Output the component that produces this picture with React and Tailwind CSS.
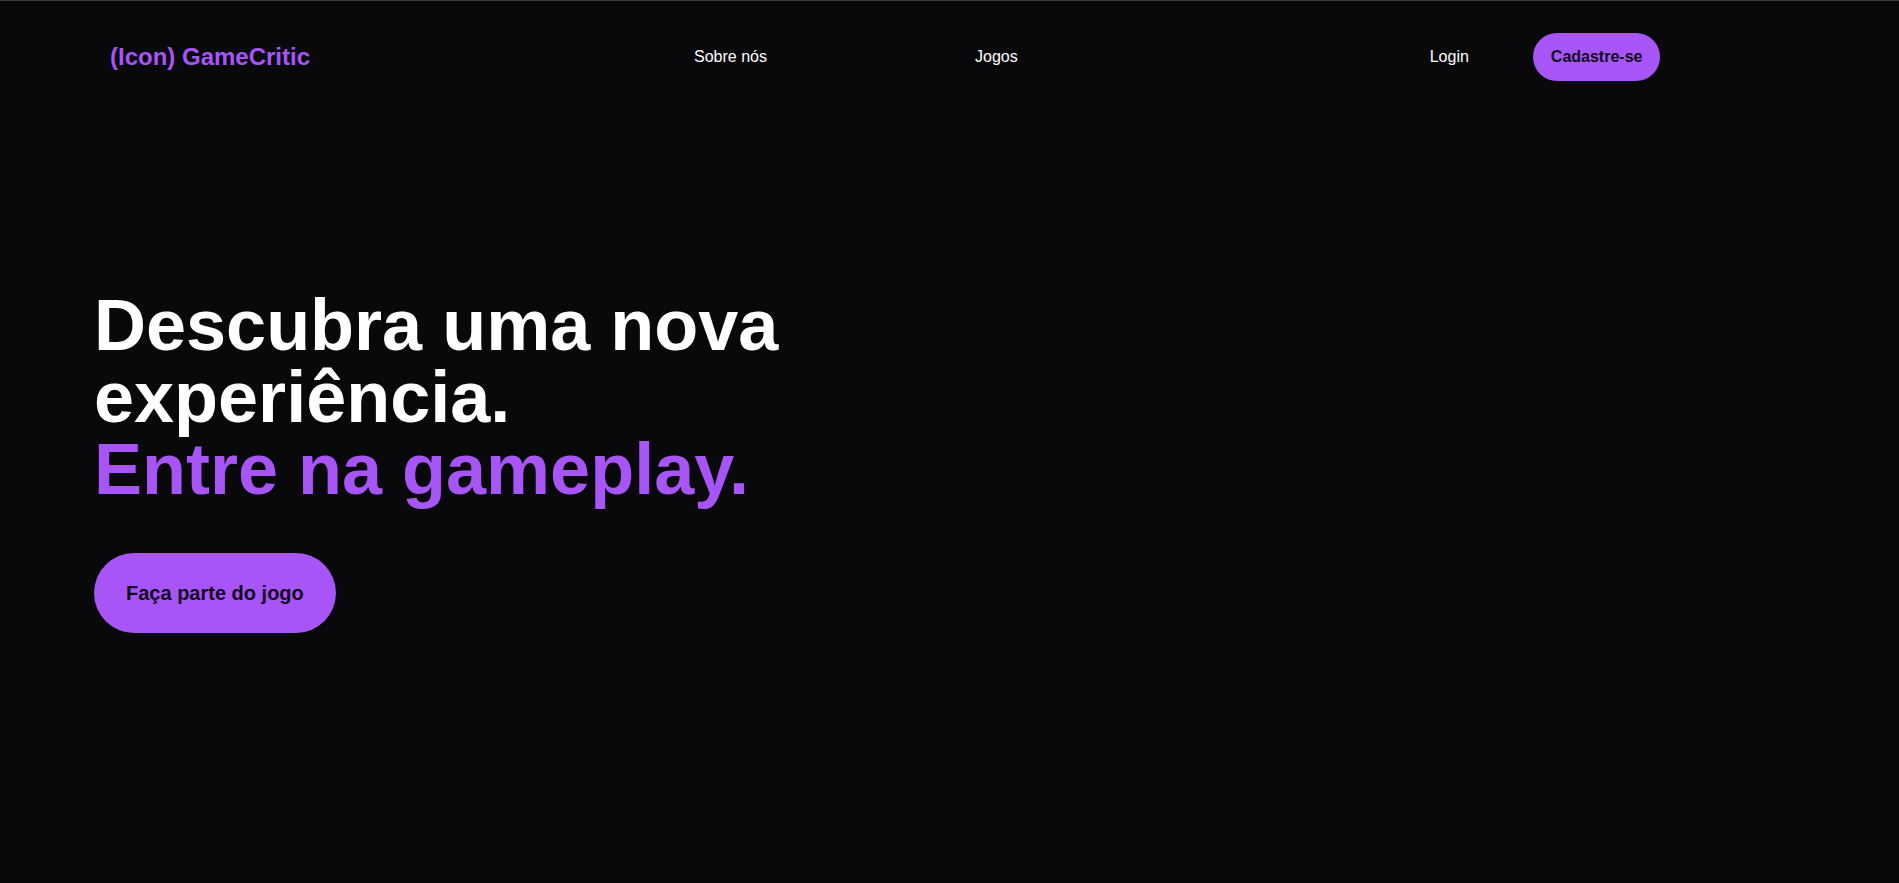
import React from 'react';

const Header = () => {
    return (
        <header className="flex items-center pl-[110px] py-8">
            <a href="#" className="text-2xl font-bold text-[#a855f7] leading-8">
                (Icon) GameCritic
            </a>
            <nav className="flex items-center ml-[384px] gap-[208px] text-base text-white">
                <a href="#">Sobre nós</a>
                <a href="#">Jogos</a>
            </nav>
            <div className="flex items-center ml-[412px] gap-16">
                <a href="#" className="text-base text-white">Login</a>
                <button className="rounded-full bg-[#a855f7] px-[18px] py-3 text-base font-bold leading-6 text-[#12081c]">
                    Cadastre-se
                </button>
            </div>
        </header>
    );
};

const Hero = () => {
    return (
        <section className="pl-[94px] pt-[176px]">
            <h1 className="text-7xl font-bold leading-none text-white">
                Descubra uma nova
                <br />
                experiência.
                <br />
                <span className="text-[#a855f7]">Entre na gameplay.</span>
            </h1>
            <button className="mt-12 rounded-full bg-[#a855f7] px-8 py-[26px] text-xl font-bold leading-7 text-[#12081c]">
                Faça parte do jogo
            </button>
        </section>
    );
};

export default function App() {
    return (
        <div
            className="min-h-screen border-t border-[#3a3a3a] bg-[#09090b]"
            style={{ fontFamily: '"Liberation Sans", Arial, sans-serif' }}
        >
            <Header />
            <Hero />
        </div>
    );
}
